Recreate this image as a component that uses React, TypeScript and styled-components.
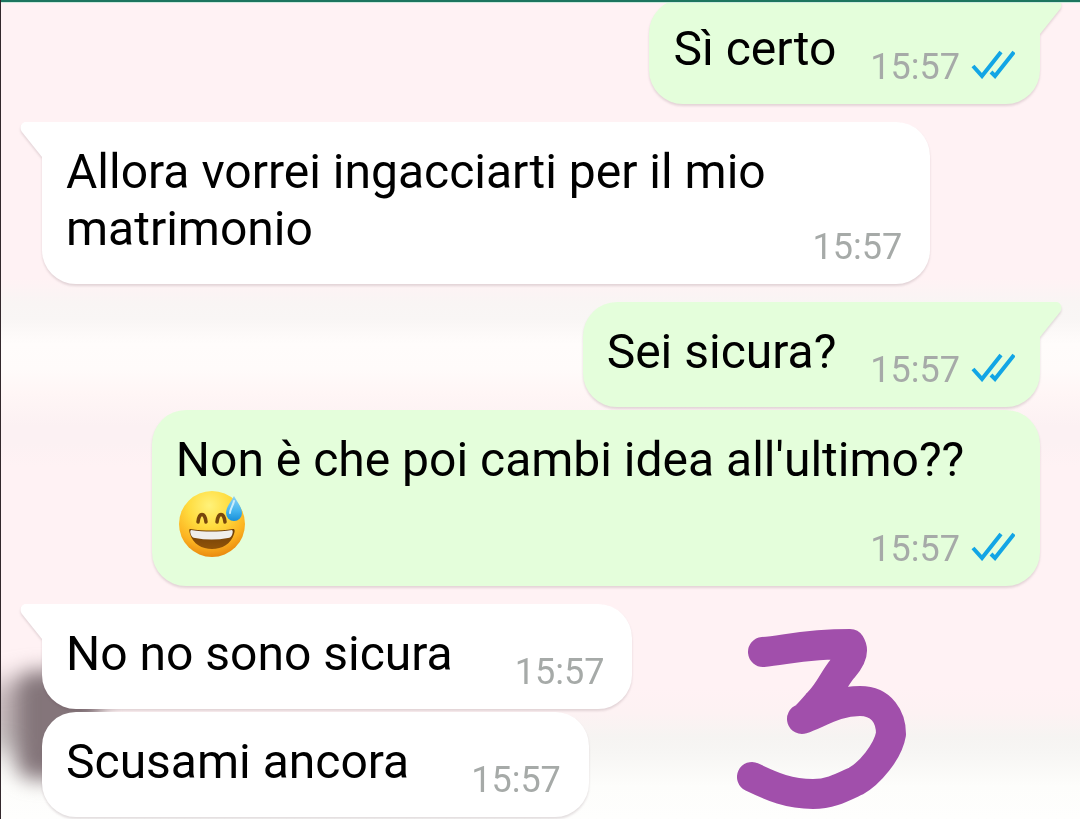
import React from 'react';
import styled, { createGlobalStyle, css } from 'styled-components';

const GlobalStyle = createGlobalStyle`
  *, *::before, *::after { box-sizing: border-box; }
  html, body { margin: 0; }
  body {
    min-height: 100vh;
    overflow: hidden;
    font-family: Roboto, "Liberation Sans", sans-serif;
    background: #fff2f4;
  }
`;

const Screen = styled.div`
  position: relative;
  isolation: isolate;
  min-height: 100vh;
  overflow: hidden;
  border-left: 1px solid #33282c;
  background: linear-gradient(
    to bottom,
    #fff2f4 0,
    #fff2f4 34%,
    #f9f5f4 37%,
    #f9f6f5 39%,
    #fffcfb 42%,
    #fffbfa 45%,
    #fff6f6 48%,
    #fcf1f3 52%,
    #fcf1f3 54%,
    #fff2f4 57%,
    #fff2f4 84%,
    #fdf2f3 87%,
    #f6f4f2 90%,
    #f7f6f4 92%,
    #fdfdfb 96%,
    #fefefd 100%
  );
`;

const WallpaperShade = styled.div`
  position: absolute;
  z-index: -1;
  left: 16px;
  bottom: 40px;
  width: 82px;
  height: 108px;
  border-radius: 16px;
  background: #84757a;
  filter: blur(10px);

  &::before {
    content: '';
    position: absolute;
    left: -30px;
    top: 10px;
    width: 50px;
    height: 70px;
    background: rgba(132, 117, 122, 0.5);
    filter: blur(8px);
  }
`;

const TopBar = styled.header`
  position: relative;
  z-index: 1;
  height: 3px;
  background: #1d755f;
  border-bottom: 1px solid #cfeade;
`;

const Thread = styled.main`
  display: flex;
  flex-direction: column;
  margin-top: -4px;
  padding: 0 40px 0 41px;
`;

const Bubble = styled.article<{ $own: boolean; $first: boolean; $wide: boolean }>`
  position: relative;
  display: ${(p) => (p.$wide ? 'grid' : 'flex')};
  align-items: end;
  gap: ${(p) => (p.$own ? 34 : 62)}px;
  align-self: ${(p) => (p.$own ? 'flex-end' : 'flex-start')};
  max-width: 89%;
  margin-top: ${(p) => (p.$first ? 18 : 3)}px;
  padding: 21px 25px 16px 24px;
  border-radius: 34px;
  background: ${(p) => (p.$own ? '#e4fedb' : '#ffffff')};
  filter: drop-shadow(0 2px 1px rgba(90, 60, 70, 0.17));
  ${(p) => p.$first && (p.$own
    ? css`border-top-right-radius: 0;`
    : css`border-top-left-radius: 0;`)}
  ${(p) => p.$wide && css`
    width: 100%;
    & > p, & > div { grid-area: 1 / 1; }
  `}
  &:first-child { margin-top: 0; }
`;

const Tail = styled.svg<{ $own: boolean }>`
  position: absolute;
  top: 0;
  width: 24px;
  height: 36px;
  ${(p) => (p.$own ? css`right: -22px; transform: scaleX(-1);` : css`left: -22px;`)}
`;

const Text = styled.p`
  margin: 0 0 11px;
  font-size: 48px;
  line-height: 57px;
  color: #000;
`;

const Emoji = styled.svg`
  display: inline-block;
  vertical-align: top;
  width: 70px;
  height: 71px;
`;

const Meta = styled.div<{ $own: boolean }>`
  display: flex;
  justify-self: end;
  align-items: center;
  gap: 11px;
  padding-right: ${(p) => (p.$own ? 0 : 3)}px;
  font-size: 36px;
  line-height: 42px;
  color: #a6aaa8;
`;

const Ticks = styled.svg`
  width: 44px;
  height: 30px;
  margin-bottom: 6px;
`;

const Drawing = styled.svg`
  position: absolute;
  z-index: 2;
  right: 173px;
  bottom: 9px;
  width: 170px;
  height: 182px;
`;

function SweatSmile() {
  return (
    <Emoji viewBox="0 0 70 71" role="img" aria-label="😅">
      <defs>
        <radialGradient id="face" cx="46%" cy="22%" r="80%">
          <stop offset="0" stopColor="#fff27a" />
          <stop offset="0.4" stopColor="#ffdc3f" />
          <stop offset="0.75" stopColor="#fcb321" />
          <stop offset="1" stopColor="#e8850d" />
        </radialGradient>
        <linearGradient id="mouth" x1="0" y1="0" x2="0" y2="1">
          <stop offset="0" stopColor="#6b3c08" />
          <stop offset="1" stopColor="#925408" />
        </linearGradient>
        <linearGradient id="drop" x1="0" y1="0" x2="0" y2="1">
          <stop offset="0" stopColor="#8ed3f6" />
          <stop offset="0.6" stopColor="#43b4ee" />
          <stop offset="1" stopColor="#188fd9" />
        </linearGradient>
      </defs>
      <circle cx="36" cy="36" r="33" fill="url(#face)" />
      <path d="M22 34c1-10 7-10 8 0M41 34c1-10 7-10 8 0" fill="none" stroke="#76460c" strokeWidth="3.5" strokeLinecap="round" />
      <path d="M14 41c14 2 29 2 43 0 2 0 2 2 1 5-3 10-12 15-22 15s-19-5-22-15c-1-3-1-5 0-5z" fill="url(#mouth)" />
      <path d="M15 42c14 2 27 2 41 0 1 1 1 2 0 5-1 2-2 3-4 3-11 2-22 2-33 0-2 0-3-1-4-3-1-3-1-4 0-5z" fill="#efeeec" />
      <path d="M58 8c3 6 8 11 8 17a8 8 0 0 1-16 0c0-6 5-11 8-17z" fill="url(#drop)" />
      <path d="M58 13c-1 5-4 8-4 12" fill="none" stroke="#c9ecfc" strokeWidth="2" strokeLinecap="round" />
    </Emoji>
  );
}

type Message = { own?: boolean; first?: boolean; wide?: boolean; text: string; emoji?: boolean };

const messages: Message[] = [
  { own: true, first: true, text: 'Sì certo' },
  { first: true, wide: true, text: 'Allora vorrei ingacciarti per il mio matrimonio' },
  { own: true, first: true, text: 'Sei sicura?' },
  { own: true, wide: true, text: "Non è che poi cambi idea all'ultimo??", emoji: true },
  { first: true, text: 'No no sono sicura' },
  { text: 'Scusami ancora' },
];

export default function App() {
  return (
    <>
      <GlobalStyle />
      <Screen>
        <WallpaperShade />
        <TopBar />
        <Thread>
          {messages.map(({ own = false, first = false, wide = false, text, emoji }) => (
            <Bubble key={text} $own={own} $first={first} $wide={wide}>
              {first && (
                <Tail $own={own} viewBox="0 0 24 36" aria-hidden="true">
                  <path d="M24 0H6C1 0-1 6 2 10L22 35H24Z" fill={own ? '#e4fedb' : '#ffffff'} />
                </Tail>
              )}
              <Text>
                {text}
                {emoji && <> <SweatSmile /></>}
              </Text>
              <Meta $own={own}>
                <time>15:57</time>
                {own && (
                  <Ticks viewBox="0 0 44 30" role="img" aria-label="Letto">
                    <path d="M2 17L11 27L30 3M20 23L24 27L43 3" fill="none" stroke="#12a5e5" strokeWidth="4" />
                  </Ticks>
                )}
              </Meta>
            </Bubble>
          ))}
        </Thread>
        <Drawing viewBox="737 628 170 182" role="img" aria-label="3">
          <path d="M763 652C786 650 805 644 850 644C855 652 850 660 843 668C833 680 830 691 818 703C811 711 805 718 802 719C818 714 835 701 860 701C882 701 891 718 891 734C888 752 869 774 856 781C841 788 830 794 813 794C789 794 773 787 752 777" fill="none" stroke="#a14fab" strokeWidth="30" strokeLinecap="round" strokeLinejoin="round" />
        </Drawing>
      </Screen>
    </>
  );
}
